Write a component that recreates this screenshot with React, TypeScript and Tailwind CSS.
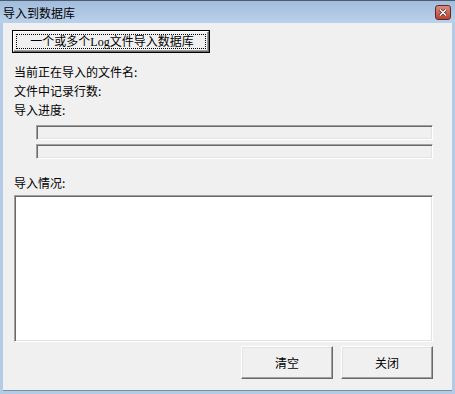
import React from 'react';

const cjk = { fontFamily: '"Noto Sans CJK SC", "Liberation Sans", sans-serif' };
const btnFont = { fontFamily: '"Liberation Serif", "Noto Sans CJK SC", serif' };

// Sunken 3D box used by progress bars and the log area
function Sunken({ className, children }: { className: string; children?: React.ReactNode }) {
  return (
    <div
      className={`border border-t-[#a0a0a0] border-l-[#a0a0a0] border-b-white border-r-white shadow-[inset_1px_1px_0_#696969,inset_-1px_-1px_0_#e3e3e3] ${className}`}
    >
      {children}
    </div>
  );
}

function RaisedButton({ label }: { label: string }) {
  return (
    <button
      className="w-[92px] h-[33px] bg-[#f0f0f0] border border-t-white border-l-white border-b-[#696969] border-r-[#696969] shadow-[inset_-1px_-1px_0_#a0a0a0,inset_1px_1px_0_#e3e3e3] text-[12px] text-black"
      style={cjk}
    >
      {label}
    </button>
  );
}

export default function App() {
  return (
    <div className="w-[455px] h-[394px] flex flex-col bg-[#b4cbe6] border-t border-t-[#4d5b6e]" style={cjk}>
      {/* Title bar */}
      <div className="h-[22px] flex items-center justify-between pl-[3px] pr-[4px] bg-gradient-to-b from-[#a2bcdc] to-[#bad1eb]">
        <span className="text-[12px] leading-none text-black pt-[2px]">导入到数据库</span>
        <div className="w-[16px] h-[15px] rounded-[3px] border border-[#5b2a2a] bg-gradient-to-b from-[#dc8a7c] to-[#b8422f] flex items-center justify-center">
          <svg width="8" height="7" viewBox="0 0 8 7">
            <path d="M1 0.5 L7 6.5 M7 0.5 L1 6.5" stroke="#3a1a1a" strokeWidth="2.6" />
            <path d="M1 0.5 L7 6.5 M7 0.5 L1 6.5" stroke="white" strokeWidth="1.5" />
          </svg>
        </div>
      </div>

      {/* Client area */}
      <div className="flex-1 mx-[3px] mb-[3px] bg-[#f0f0f0] flex flex-col text-[12px] text-black border-b border-b-[#7a8ea8]">
        <div className="ml-[9px] mt-[7px] w-[198px] h-[23px] border border-black p-0">
          <div className="w-full h-full border border-t-white border-l-white border-b-[#696969] border-r-[#696969] shadow-[inset_-1px_-1px_0_#a0a0a0] p-[2px]">
            <div
              className="w-full h-full border border-dotted border-[#000] flex items-center justify-center text-[12px] leading-none pl-[2px]"
              style={btnFont}
            >
              一个或多个Log文件导入数据库
            </div>
          </div>
        </div>

        <div className="ml-[11px] mt-[9px] leading-[19px]">当前正在导入的文件名:</div>
        <div className="ml-[11px] leading-[19px]">文件中记录行数:</div>
        <div className="ml-[11px] leading-[19px]">导入进度:</div>

        <div className="ml-[33px] mt-[6px] flex flex-col gap-[4px]">
          <Sunken className="w-[397px] h-[15px] bg-[#f0f0f0]" />
          <Sunken className="w-[397px] h-[15px] bg-[#f0f0f0]" />
        </div>

        <div className="ml-[11px] mt-[14px] leading-[19px]">导入情况:</div>

        <Sunken className="ml-[11px] mt-[3px] w-[419px] h-[147px] bg-white" />

        <div className="ml-[238px] mt-[4px] flex gap-[8px]">
          <RaisedButton label="清空" />
          <RaisedButton label="关闭" />
        </div>
      </div>
    </div>
  );
}
